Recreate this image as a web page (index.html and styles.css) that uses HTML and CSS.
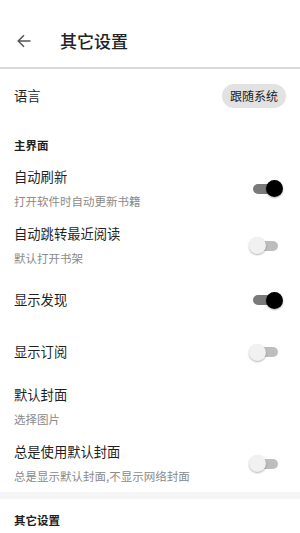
FILE: index.html
```html
<!DOCTYPE html>
<html lang="zh">
<head>
<meta charset="utf-8">
<title>其它设置</title>
<link rel="stylesheet" href="styles.css">
</head>
<body>
<header class="appbar">
  <svg class="back" width="14" height="14" viewBox="0 0 14 14"><path d="M13.5 7H1.2M7 1.2L1.2 7L7 12.8" fill="none" stroke="#555" stroke-width="1.5"/></svg>
  <h1 class="title">其它设置</h1>
</header>
<main class="list">
  <div class="row row-single">
    <div class="text"><div class="label">语言</div></div>
    <span class="chip">跟随系统</span>
  </div>
  <div class="category">主界面</div>
  <div class="row row-double">
    <div class="text"><div class="label">自动刷新</div><div class="summary">打开软件时自动更新书籍</div></div>
    <span class="switch on"></span>
  </div>
  <div class="row row-double">
    <div class="text"><div class="label">自动跳转最近阅读</div><div class="summary">默认打开书架</div></div>
    <span class="switch"></span>
  </div>
  <div class="row row-single">
    <div class="text"><div class="label">显示发现</div></div>
    <span class="switch on"></span>
  </div>
  <div class="row row-single">
    <div class="text"><div class="label">显示订阅</div></div>
    <span class="switch"></span>
  </div>
  <div class="row row-double">
    <div class="text"><div class="label">默认封面</div><div class="summary">选择图片</div></div>
  </div>
  <div class="row row-double">
    <div class="text"><div class="label">总是使用默认封面</div><div class="summary">总是显示默认封面,不显示网络封面</div></div>
    <span class="switch"></span>
  </div>
  <div class="band"></div>
  <div class="category category-2">其它设置</div>
</main>
</body>
</html>
```
FILE: styles.css
```css
* { box-sizing: border-box; }
html, body { margin: 0; padding: 0; }
body {
  width: 300px;
  height: 533px;
  overflow: hidden;
  background: #fff;
  font-family: "Noto Sans CJK SC", "Noto Sans", sans-serif;
  color: #1f1f1f;
}
.appbar {
  height: 69px;
  display: flex;
  align-items: flex-end;
  padding: 0 0 14px 17px;
  border-bottom: 2px solid #d9d9d9;
}
.back { flex: none; margin-bottom: 5px; }
.title {
  margin: 0 0 0 29px;
  font-size: 17px;
  line-height: 24px;
  font-weight: 500;
  color: #222;
}
.list { display: flex; flex-direction: column; }
.row {
  display: flex;
  align-items: center;
  justify-content: space-between;
  padding-left: 14px;
}
.row-single { height: 52px; }
.list > .row-single:first-child { height: 54px; }
.row-double { height: 57px; }
.text { display: flex; flex-direction: column; gap: 3px; }
.label { font-size: 13.3px; line-height: 22px; color: #1f1f1f; }
.summary { font-size: 11.5px; line-height: 20px; color: #8a8a8a; }
.chip {
  width: 64px;
  height: 24px;
  margin-right: 14px;
  border-radius: 12px;
  background: #e2e2e2;
  font-size: 12px;
  line-height: 24px;
  text-align: center;
  color: #222;
}
.category {
  padding: 15px 0 8px 14px;
  font-size: 11.5px;
  line-height: 14px;
  font-weight: 700;
  color: #1f1f1f;
}
.category-2 { padding-top: 14px; }
.band { height: 7px; background: #f5f5f5; }
.switch {
  position: relative;
  width: 34px;
  height: 17px;
  margin-right: 17px;
  flex: none;
}
.switch::before {
  content: "";
  position: absolute;
  left: 4px;
  right: 5px;
  top: 3.5px;
  height: 10px;
  border-radius: 5px;
  background: #bdbdbd;
}
.switch::after {
  content: "";
  position: absolute;
  left: 0;
  top: 0;
  width: 17px;
  height: 17px;
  border-radius: 50%;
  background: #f1f1f1;
  box-shadow: 0 1px 2px rgba(0,0,0,0.3);
}
.switch.on::before { background: #7a7a7a; }
.switch.on::after { left: 17px; background: #000; }
```
